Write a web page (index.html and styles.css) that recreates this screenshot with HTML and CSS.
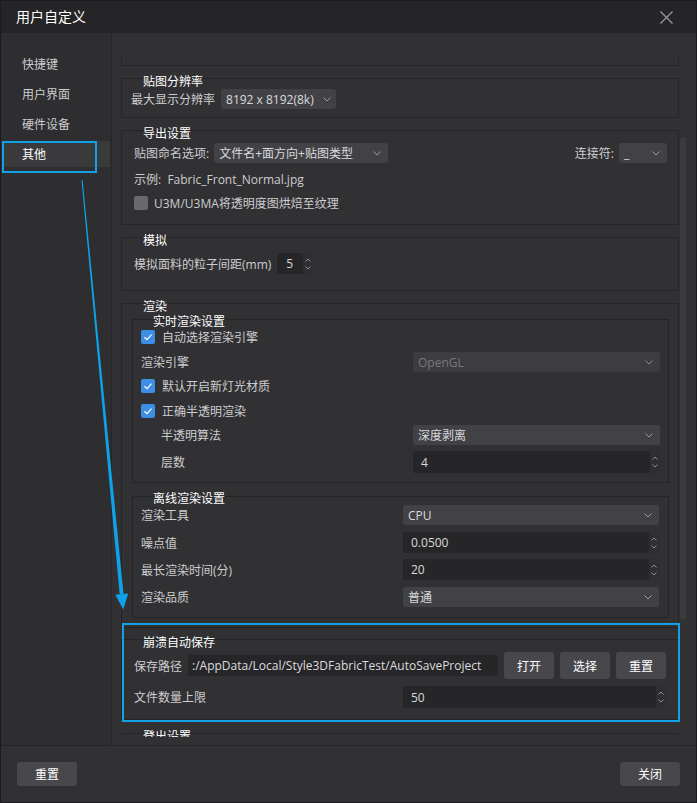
FILE: index.html
```html
<!DOCTYPE html>
<html lang="zh">
<head>
<meta charset="utf-8">
<title>用户自定义</title>
<link rel="stylesheet" href="styles.css">
</head>
<body>
<div class="dialog">
  <div class="titlebar">
    <span class="title">用户自定义</span>
    <svg class="close" viewBox="0 0 13 13" width="13" height="13"><path d="M0.5 0.5 L12.5 12.5 M12.5 0.5 L0.5 12.5" stroke="#9c9ca0" stroke-width="1.2" fill="none"/></svg>
  </div>
  <div class="body">
    <nav class="sidebar">
      <div class="nav-item">快捷键</div>
      <div class="nav-item">用户界面</div>
      <div class="nav-item">硬件设备</div>
      <div class="nav-item active">其他</div>
    </nav>
    <div class="pane">
      <div class="viewport">
        <div class="group partial"></div>

        <div class="group ga">
          <div class="gtitle">贴图分辨率</div>
          <div class="row mt2">
            <span class="lbl">最大显示分辨率</span>
            <div class="combo w-res"><span>8192 x 8192(8k)</span><svg class="chev" width="8" height="5" viewBox="0 0 8 5"><path d="M0.5 0.5 L4 4 L7.5 0.5" fill="none" stroke="#9a9a9e"/></svg></div>
          </div>
        </div>

        <div class="group gb">
          <div class="gtitle">导出设置</div>
          <div class="row mt4 g5">
            <span class="lbl">贴图命名选项:</span>
            <div class="combo w-name"><span>文件名+面方向+贴图类型</span><svg class="chev" width="8" height="5" viewBox="0 0 8 5"><path d="M0.5 0.5 L4 4 L7.5 0.5" fill="none" stroke="#9a9a9e"/></svg></div>
            <span class="grow"></span>
            <span class="lbl">连接符:</span>
            <div class="combo w-sep"><span>_</span><svg class="chev" width="8" height="5" viewBox="0 0 8 5"><path d="M0.5 0.5 L4 4 L7.5 0.5" fill="none" stroke="#9a9a9e"/></svg></div>
          </div>
          <div class="row mt6">
            <span class="lbl">示例:&nbsp; Fabric_Front_Normal.jpg</span>
          </div>
          <div class="row mt4">
            <span class="cb off"></span>
            <span class="lbl">U3M/U3MA将透明度图烘焙至纹理</span>
          </div>
        </div>

        <div class="group gc">
          <div class="gtitle">模拟</div>
          <div class="row mt7 h21">
            <span class="lbl">模拟面料的粒子间距(mm)</span>
            <div class="spin w-sim"><span class="val">5</span><span class="arrows"><svg width="6" height="4" viewBox="0 0 6 4"><path d="M0.5 3.5 L3 1 L5.5 3.5" fill="none" stroke="#8e8e92"/></svg><svg width="6" height="4" viewBox="0 0 6 4"><path d="M0.5 0.5 L3 3 L5.5 0.5" fill="none" stroke="#8e8e92"/></svg></span></div>
          </div>
        </div>

        <div class="group gd">
          <div class="gtitle">渲染</div>
          <div class="inner ge">
            <div class="gtitle">实时渲染设置</div>
            <div class="row g7">
              <span class="cb"><svg width="14" height="14" viewBox="0 0 14 14"><path d="M3.5 7.2 L6 9.6 L10.5 4.6" fill="none" stroke="#fff" stroke-width="1.2"/></svg></span>
              <span class="lbl">自动选择渲染引擎</span>
            </div>
            <div class="row mt5">
              <span class="lbl grow">渲染引擎</span>
              <div class="combo disabled w-e"><span>OpenGL</span><svg class="chev" width="8" height="5" viewBox="0 0 8 5"><path d="M0.5 0.5 L4 4 L7.5 0.5" fill="none" stroke="#8a8a8e"/></svg></div>
            </div>
            <div class="row mt4 g7">
              <span class="cb"><svg width="14" height="14" viewBox="0 0 14 14"><path d="M3.5 7.2 L6 9.6 L10.5 4.6" fill="none" stroke="#fff" stroke-width="1.2"/></svg></span>
              <span class="lbl">默认开启新灯光材质</span>
            </div>
            <div class="row mt5 g7">
              <span class="cb"><svg width="14" height="14" viewBox="0 0 14 14"><path d="M3.5 7.2 L6 9.6 L10.5 4.6" fill="none" stroke="#fff" stroke-width="1.2"/></svg></span>
              <span class="lbl">正确半透明渲染</span>
            </div>
            <div class="row mt4">
              <span class="lbl grow sub">半透明算法</span>
              <div class="combo w-e"><span>深度剥离</span><svg class="chev" width="8" height="5" viewBox="0 0 8 5"><path d="M0.5 0.5 L4 4 L7.5 0.5" fill="none" stroke="#9a9a9e"/></svg></div>
            </div>
            <div class="row mt6 h22">
              <span class="lbl grow sub">层数</span>
              <div class="spin w-e"><span class="val">4</span><span class="arrows"><svg width="6" height="4" viewBox="0 0 6 4"><path d="M0.5 3.5 L3 1 L5.5 3.5" fill="none" stroke="#8e8e92"/></svg><svg width="6" height="4" viewBox="0 0 6 4"><path d="M0.5 0.5 L3 3 L5.5 0.5" fill="none" stroke="#8e8e92"/></svg></span></div>
            </div>
          </div>
          <div class="inner gf">
            <div class="gtitle">离线渲染设置</div>
            <div class="row mt1">
              <span class="lbl grow">渲染工具</span>
              <div class="combo w-f"><span>CPU</span><svg class="chev" width="8" height="5" viewBox="0 0 8 5"><path d="M0.5 0.5 L4 4 L7.5 0.5" fill="none" stroke="#9a9a9e"/></svg></div>
            </div>
            <div class="row mt7 h21">
              <span class="lbl grow">噪点值</span>
              <div class="spin w-f"><span class="val">0.0500</span><span class="arrows"><svg width="6" height="4" viewBox="0 0 6 4"><path d="M0.5 3.5 L3 1 L5.5 3.5" fill="none" stroke="#8e8e92"/></svg><svg width="6" height="4" viewBox="0 0 6 4"><path d="M0.5 0.5 L3 3 L5.5 0.5" fill="none" stroke="#8e8e92"/></svg></span></div>
            </div>
            <div class="row mt6 h21">
              <span class="lbl grow">最长渲染时间(分)</span>
              <div class="spin w-f"><span class="val">20</span><span class="arrows"><svg width="6" height="4" viewBox="0 0 6 4"><path d="M0.5 3.5 L3 1 L5.5 3.5" fill="none" stroke="#8e8e92"/></svg><svg width="6" height="4" viewBox="0 0 6 4"><path d="M0.5 0.5 L3 3 L5.5 0.5" fill="none" stroke="#8e8e92"/></svg></span></div>
            </div>
            <div class="row mt7">
              <span class="lbl grow">渲染品质</span>
              <div class="combo w-f"><span>普通</span><svg class="chev" width="8" height="5" viewBox="0 0 8 5"><path d="M0.5 0.5 L4 4 L7.5 0.5" fill="none" stroke="#9a9a9e"/></svg></div>
            </div>
          </div>
        </div>

        <div class="group gg">
          <div class="gtitle">崩溃自动保存</div>
          <div class="row mt4 h27">
            <span class="lbl w-path-lbl">保存路径</span>
            <div class="path">:/AppData/Local/Style3DFabricTest/AutoSaveProject</div>
            <button class="btn small">打开</button>
            <button class="btn small">选择</button>
            <button class="btn small">重置</button>
          </div>
          <div class="row mt7 h22">
            <span class="lbl grow">文件数量上限</span>
            <div class="spin w-g"><span class="val">50</span><span class="arrows"><svg width="6" height="4" viewBox="0 0 6 4"><path d="M0.5 3.5 L3 1 L5.5 3.5" fill="none" stroke="#8e8e92"/></svg><svg width="6" height="4" viewBox="0 0 6 4"><path d="M0.5 0.5 L3 3 L5.5 0.5" fill="none" stroke="#8e8e92"/></svg></span></div>
          </div>
        </div>

        <div class="group gh">
          <div class="gtitle">登出设置</div>
          <div class="row mt4"></div>
        </div>
      </div>
      <div class="scrollbar"><div class="handle"></div></div>
    </div>
  </div>
  <div class="footer">
    <button class="btn">重置</button>
    <button class="btn">关闭</button>
  </div>

  <svg class="arrow" width="697" height="803" viewBox="0 0 697 803">
    <polygon points="81.5,180 82.6,180 123.5,594 119.7,594.4" fill="#0ea2e8"/>
    <polygon points="115.4,594.8 128.2,593.4 123.2,609.5" fill="#0ea2e8"/>
  </svg>
  <div class="mark"></div>
</div>
</body>
</html>
```
FILE: styles.css
```css
* { box-sizing: border-box; }
html, body { margin: 0; padding: 0; background: #2a2a2d; }
body {
  font-family: "Open Sans", "Noto Sans CJK SC", sans-serif;
  font-size: 12px;
  color: #cdcdcf;
}
.dialog {
  position: relative;
  width: 697px;
  height: 803px;
  border: 1px solid #1b1b1d;
  background: #313134;
  display: flex;
  flex-direction: column;
  overflow: hidden;
}
.titlebar {
  height: 32px;
  flex: none;
  background: #252527;
  display: flex;
  align-items: center;
  justify-content: space-between;
  padding: 0 23px 0 15px;
}
.title { color: #fff; font-size: 14px; line-height: 16px; }
.close { display: block; }

.body {
  height: 713px;
  flex: none;
  display: flex;
  border-bottom: 1px solid #262628;
}
.sidebar {
  width: 111px;
  flex: none;
  background: #2e2e31;
  border-right: 1px solid #262628;
  padding: 18px 1px 0;
}
.nav-item {
  position: relative;
  height: 26px;
  line-height: 28px;
  padding-left: 20px;
  margin-bottom: 4px;
  color: #cdcdcf;
}
.nav-item.active { background: #3a3a3d; color: #fff; }
.nav-item.active::after {
  content: "";
  position: absolute;
  left: 0;
  top: 0;
  width: 91px;
  height: 28px;
  border: 2px solid #12a0e6;
}

.pane {
  flex: 1;
  display: flex;
  align-items: flex-start;
  padding: 24px 0 0 9px;
  background: #313134;
}
.viewport {
  width: 558px;
  height: 680px;
  flex: none;
  overflow: hidden;
}
.scrollbar { width: 6px; margin-left: 1px; padding-top: 80px; flex: none; }
.handle { height: 483px; background: #3b3b3e; border-radius: 3px; }

.group {
  border: 1px solid #252528;
  margin-bottom: 12px;
  padding: 0 12px;
}
.gtitle {
  color: #fff;
  height: 12px;
  line-height: 13px;
  margin: -4px 0 0 9px;
  white-space: nowrap;
}
.partial { border-top: none; height: 9px; }
.ga { padding: 0 12px 8px 9px; }
.ga .gtitle { margin-left: 12px; }
.gb { padding: 0 11px 11px 12px; }
.gc { padding-bottom: 16px; }
.gd { padding: 0 9px 9px 10px; margin-bottom: 11px; }
.gd > .gtitle { margin-left: 11px; }
.inner { border: 1px solid #252528; }
.inner .gtitle { margin: -5px 0 0 12px; }
.ge { margin-top: 7px; margin-bottom: 13px; padding: 0 8px 9px 8px; }
.gf { padding: 0 9px 10px 8px; }
.gg { padding-bottom: 11px; margin-bottom: 13px; }
.gh { height: 40px; }

.row { display: flex; align-items: center; height: 20px; gap: 6px; }
.row.g5 { gap: 5px; }
.row.g7 { gap: 7px; }
.h21 { height: 21px; }
.h22 { height: 22px; }
.h27 { height: 27px; }
.mt1 { margin-top: 1px; }
.mt2 { margin-top: 2px; }
.mt4 { margin-top: 4px; }
.mt5 { margin-top: 5px; }
.mt6 { margin-top: 6px; }
.mt7 { margin-top: 7px; }
.lbl { white-space: nowrap; line-height: 17px; padding-top: 1px; }
.grow { flex: 1; }
.sub { padding-left: 20px; }

.combo {
  height: 20px;
  flex: none;
  background: #424246;
  border-radius: 3px;
  display: flex;
  align-items: center;
  justify-content: space-between;
  padding: 0 7px 0 5px;
  color: #dadadc;
  white-space: nowrap;
}
.combo.disabled { background: #3d3d40; color: #78787c; }
.chev { display: block; flex: none; }
.w-res { width: 115px; padding-right: 5px; }
.w-name { width: 174px; }
.w-sep { width: 48px; }
.w-e { width: 247px; }
.w-f { width: 256px; }
.w-g { width: 263px; }
.w-sim { width: 36px; }
.w-path-lbl { width: 48px; flex: none; }

.spin {
  height: 100%;
  flex: none;
  background: #262629;
  border-radius: 2px;
  display: flex;
  align-items: stretch;
  padding-left: 8px;
  color: #dadadc;
}
.w-sim { padding-left: 9px; }
.spin .val { flex: 1; display: flex; align-items: center; }
.arrows {
  width: 10px;
  background: #2f2f32;
  display: flex;
  flex-direction: column;
  justify-content: center;
  align-items: center;
  gap: 4px;
  border-radius: 0 2px 2px 0;
}
.arrows svg { display: block; }

.cb {
  width: 14px;
  height: 14px;
  flex: none;
  border-radius: 2px;
  background: #3d8ee6;
}
.cb svg { display: block; }
.cb.off { background: #6a6a6e; }

.path {
  flex: 1;
  height: 21px;
  line-height: 21px;
  background: #262629;
  border-radius: 2px;
  padding-left: 4px;
  color: #dcdcde;
  overflow: hidden;
  white-space: nowrap;
}

.btn {
  width: 60px;
  height: 24px;
  border: none;
  border-radius: 3px;
  background: #48484c;
  color: #fff;
  font: inherit;
  padding: 0;
}
.btn.small { width: 50px; height: 27px; flex: none; }

.footer {
  flex: 1;
  display: flex;
  justify-content: space-between;
  align-items: flex-start;
  padding: 16px 16px 0 16px;
  background: #313134;
}

.arrow {
  position: absolute;
  left: -1px;
  top: -1px;
  pointer-events: none;
}
.mark {
  position: absolute;
  left: 121px;
  top: 622px;
  width: 558px;
  height: 99px;
  border: 2px solid #12a0e6;
  pointer-events: none;
}
```
